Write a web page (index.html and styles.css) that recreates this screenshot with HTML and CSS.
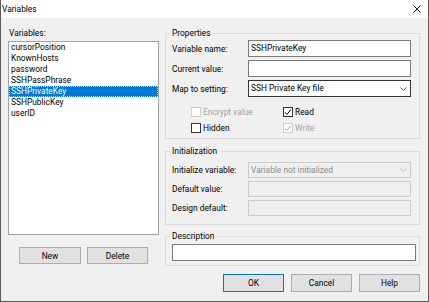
FILE: index.html
```html
<!DOCTYPE html>
<html lang="en">
<head>
    <meta charset="UTF-8">
    <meta name="viewport" content="width=device-width, initial-scale=1.0">
    <title>Variables</title>
    <link rel="stylesheet" href="styles.css">
</head>
<body>
    <div class="window">
        <div class="titlebar">
            <span class="title">Variables</span>
            <button class="close-btn" title="Close">
                <svg width="8" height="8" viewBox="0 0 8 8">
                    <path d="M0.5 0.5 L7.5 7.5 M7.5 0.5 L0.5 7.5" stroke="#000" stroke-width="0.9" fill="none"/>
                </svg>
            </button>
        </div>

        <div class="content">
            <!-- variable list -->
            <div class="left-col">
                <div class="list-label">Variables:</div>
                <ul class="listbox">
                    <li>cursorPosition</li>
                    <li>KnownHosts</li>
                    <li>password</li>
                    <li>SSHPassPhrase</li>
                    <li class="selected">SSHPrivateKey</li>
                    <li>SSHPublicKey</li>
                    <li>userID</li>
                </ul>
                <div class="list-buttons">
                    <button class="btn btn-new">New</button>
                    <button class="btn btn-delete">Delete</button>
                </div>
            </div>

            <!-- properties side -->
            <div class="right-col">
                <fieldset class="group group-props">
                    <legend>Properties</legend>
                    <div class="form-grid">
                        <label>Variable name:</label>
                        <div class="field">SSHPrivateKey</div>
                        <label>Current value:</label>
                        <div class="field"></div>
                        <label>Map to setting:</label>
                        <div class="field select focused">
                            <span>SSH Private Key file</span>
                            <svg class="chevron" width="7" height="4" viewBox="0 0 7 4">
                                <path d="M0.5 0.5 L3.5 3.5 L6.5 0.5" stroke="#444" stroke-width="0.9" fill="none"/>
                            </svg>
                        </div>
                    </div>
                    <div class="checks">
                        <div class="check disabled">
                            <span class="box"></span>Encrypt value
                        </div>
                        <div class="check">
                            <span class="box">
                                <svg width="8" height="8" viewBox="0 0 8 8">
                                    <path d="M1 4.2 L3 6.3 L7 1.5" stroke="#000" stroke-width="1" fill="none"/>
                                </svg>
                            </span>Read
                        </div>
                        <div class="check">
                            <span class="box"></span>Hidden
                        </div>
                        <div class="check disabled">
                            <span class="box">
                                <svg width="8" height="8" viewBox="0 0 8 8">
                                    <path d="M1 4.2 L3 6.3 L7 1.5" stroke="#a8a8a8" stroke-width="1" fill="none"/>
                                </svg>
                            </span>Write
                        </div>
                    </div>
                </fieldset>

                <fieldset class="group group-init">
                    <legend>Initialization</legend>
                    <div class="form-grid compact">
                        <label>Initialize variable:</label>
                        <div class="field select disabled">
                            <span>Variable not initialized</span>
                            <svg class="chevron" width="7" height="4" viewBox="0 0 7 4">
                                <path d="M0.5 0.5 L3.5 3.5 L6.5 0.5" stroke="#b5b5b5" stroke-width="0.9" fill="none"/>
                            </svg>
                        </div>
                        <label>Default value:</label>
                        <div class="field disabled"></div>
                        <label>Design default:</label>
                        <div class="field disabled"></div>
                    </div>
                </fieldset>

                <fieldset class="group group-desc">
                    <legend>Description</legend>
                    <div class="field"></div>
                </fieldset>

                <div class="dialog-buttons">
                    <button class="btn btn-default">OK</button>
                    <button class="btn">Cancel</button>
                    <button class="btn">Help</button>
                </div>
            </div>
        </div>
    </div>
</body>
</html>
```

FILE: styles.css
```css
* {
    box-sizing: border-box;
}

body {
    margin: 0;
    font-family: Roboto, "Liberation Sans", sans-serif;
    font-size: 8.4px;
    color: #000;
    background: #fff;
}

.window {
    width: 429px;
    height: 302px;
    background: #f0f0f0;
    border: 1px solid #5a5a5a;
    border-top: none;
    display: flex;
    flex-direction: column;
}

.titlebar {
    height: 18px;
    background: #fff;
    display: flex;
    align-items: center;
    justify-content: space-between;
    padding: 0 7px 0 1px;
}

.close-btn {
    border: none;
    background: none;
    padding: 0;
    width: 8px;
    height: 8px;
    display: flex;
}

.content {
    flex: 1;
    display: flex;
    gap: 6px;
    padding: 9px 8px 0 7px;
}

/* left column */
.left-col {
    width: 151px;
    display: flex;
    flex-direction: column;
}

.list-label {
    line-height: 12px;
    padding-left: 1px;
    margin-bottom: 2px;
}

.listbox {
    height: 194px;
    margin: 0;
    padding: 0;
    list-style: none;
    background: #fff;
    border: 1px solid #a0a0a0;
}

.listbox li {
    height: 11px;
    line-height: 11px;
    padding-left: 2px;
    white-space: nowrap;
}

.listbox li.selected {
    background: #0078d7;
    color: #fff;
    outline: 1px dotted #f3c79a;
    outline-offset: -1px;
}

.list-buttons {
    display: flex;
    justify-content: center;
    gap: 6px;
    margin-top: 12px;
}

.btn {
    height: 17px;
    width: 61px;
    padding: 0;
    font: inherit;
    color: #000;
    background: #e1e1e1;
    border: 1px solid #adadad;
}

.btn-new {
    width: 62px;
}

.btn-default {
    border-color: #0078d7;
}

/* right column */
.right-col {
    width: 255px;
    display: flex;
    flex-direction: column;
}

.group {
    margin: 0;
    min-width: 0;
    border: 1px solid #dcdcdc;
    padding: 1px 8px 4px 6px;
}

.group legend {
    padding: 0 2px;
    margin-left: -2px;
    line-height: 12px;
}

.group-init {
    margin-top: 6px;
    padding-top: 5px;
    padding-bottom: 8px;
}

.group-desc {
    margin-top: 5px;
    padding: 2px 3px 4px 6px;
}

.form-grid {
    display: grid;
    grid-template-columns: 76px 1fr;
    grid-auto-rows: 17px;
    row-gap: 3px;
    align-items: center;
}

.form-grid.compact {
    grid-auto-rows: 16px;
}

.field {
    height: 17px;
    line-height: 15px;
    padding-left: 2px;
    background: #fff;
    border: 1px solid #7a7a7a;
    white-space: nowrap;
}

.compact .field {
    height: 16px;
    line-height: 14px;
}

.field.select {
    display: flex;
    align-items: center;
    justify-content: space-between;
    padding-right: 3px;
}

.field.focused {
    border-color: #333;
}

.field.disabled {
    background: #efefef;
    border-color: #cccccc;
    color: #8c8c8c;
}

.checks {
    display: grid;
    grid-template-columns: 92px auto;
    row-gap: 4px;
    margin: 9px 0 0 19px;
}

.check {
    display: flex;
    align-items: center;
    gap: 2px;
    height: 12px;
}

.check .box {
    width: 10px;
    height: 10px;
    border: 1px solid #333;
    background: #fff;
    display: flex;
    align-items: center;
    justify-content: center;
}

.check.disabled {
    color: #a5a5a5;
}

.check.disabled .box {
    border-color: #cccccc;
}

.dialog-buttons {
    display: flex;
    justify-content: flex-end;
    gap: 7px;
    margin-top: 8px;
}

.dialog-buttons .btn {
    height: 18px;
}
```
